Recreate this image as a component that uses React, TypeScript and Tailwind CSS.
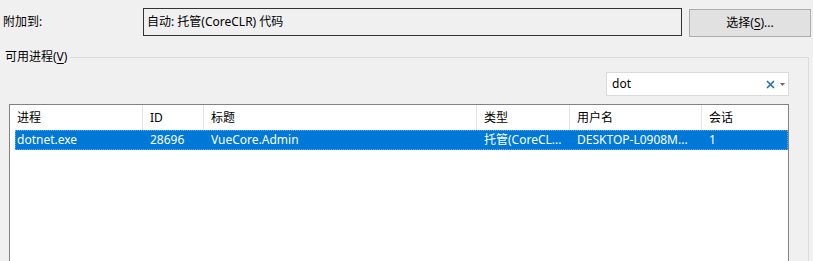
const FONT = 'font-[family-name:"Noto_Sans","Noto_Sans_CJK_SC",sans-serif]'

const cols = [
  { title: '进程', value: 'dotnet.exe' },
  { title: 'ID', value: '28696' },
  { title: '标题', value: 'VueCore.Admin' },
  { title: '类型', value: '托管(CoreCL...' },
  { title: '用户名', value: 'DESKTOP-L0908M...' },
  { title: '会话', value: '1' },
]

export default function App() {
  return (
    <div
      className={`${FONT} w-[813px] h-[261px] overflow-hidden bg-[#f0f0f0] text-[12px] leading-[16px] text-black`}
    >
      {/* attach-to row */}
      <div className="flex items-start pt-[8px]">
        <div className="w-[143px] pl-[3px] h-[28px] flex items-center">附加到:</div>
        <div className="w-[539px] h-[28px] border border-[#333333] bg-[#f0f0f0] flex items-center pl-[3px]">
          自动: 托管(CoreCLR) 代码
        </div>
        <button className="ml-[7px] mt-[1px] w-[122px] h-[28px] border border-[#adadad] bg-[#e1e1e1] flex items-center justify-center">
          选择(<span className="underline underline-offset-2">S</span>)...
        </button>
      </div>

      {/* available processes group */}
      <fieldset className="mt-[12px] mr-[4px] border-t border-r border-[#dcdcdc] p-0 min-w-0">
        <legend className="pl-[5px] pr-[3px] leading-[16px]">
          可用进程(<span className="underline underline-offset-2">V</span>)
        </legend>
        <div className="pl-[9px] pr-[19px]">
          <div className="flex justify-end mt-[7px]">
            <div className="w-[183px] h-[24px] bg-white border border-[#dadada] flex items-center pl-[5px]">
              <span className="flex-1">dot</span>
              <svg width="9" height="9" viewBox="0 0 9 9" className="mr-[5px]">
                <path d="M1 1 L8 8 M8 1 L1 8" stroke="#1f6cc4" strokeWidth="1.6" />
              </svg>
              <svg width="5" height="3" viewBox="0 0 5 3" className="mr-[3px]">
                <path d="M0 0 H5 L2.5 3 Z" fill="#6d6d6d" />
              </svg>
            </div>
          </div>

          <div className="mt-[8px] h-[170px] border border-[#828282] bg-white">
            <div className="grid grid-cols-[133px_61px_273px_93px_132px_1fr] h-[25px]">
              {cols.map((c, i) => (
                <div
                  key={c.title}
                  className={`flex items-center pl-[7px] ${i < cols.length - 1 ? 'border-r border-[#e5e5e5]' : ''}`}
                >
                  {c.title}
                </div>
              ))}
            </div>
            <div className="ml-[5px] h-[20px] grid grid-cols-[128px_61px_273px_93px_132px_1fr] bg-[#0078d7] text-white outline-1 outline-dotted outline-offset-[-1px] outline-[#6aaee8]">
              {cols.map((c, i) => (
                <div
                  key={c.title}
                  className={`flex items-center whitespace-nowrap overflow-hidden ${i === 0 ? 'pl-[2px]' : 'pl-[7px]'}`}
                >
                  {c.value}
                </div>
              ))}
            </div>
          </div>
        </div>
      </fieldset>
    </div>
  )
}
